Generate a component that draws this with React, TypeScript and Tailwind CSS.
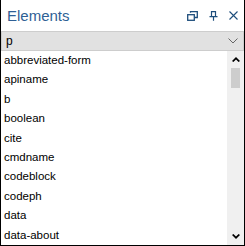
import React from "react";

const ITEMS = [
  "abbreviated-form",
  "apiname",
  "b",
  "boolean",
  "cite",
  "cmdname",
  "codeblock",
  "codeph",
  "data",
  "data-about",
];

export default function App() {
  return (
    <div
      className="w-[245px] h-[246px] bg-white border-x border-b border-black flex flex-col overflow-hidden"
      style={{ fontFamily: "'Liberation Sans', Arial, sans-serif" }}
    >
      {/* title bar */}
      <div className="h-[31px] flex items-center pl-[6px] pr-[6px] shrink-0">
        <span className="text-[15px] leading-none text-[#2f5f95]">Elements</span>
        <div className="ml-auto flex items-center gap-[11px] text-[#1e4e7c]">
          <svg width="11" height="10" viewBox="0 0 11 10" fill="none" stroke="currentColor" strokeWidth="1.3">
            <rect x="0.7" y="3.7" width="6.6" height="5.6" />
            <path d="M3.5 1.7V0.7H10.3V6.5H7.5" />
          </svg>
          <svg width="9" height="10" viewBox="0 0 9 10" fill="none" stroke="currentColor" strokeWidth="1.2">
            <path d="M2.5 0.6H6.5V5.5H2.5Z" />
            <path d="M0.5 5.6H8.5M4.5 5.6V9.8" />
          </svg>
          <svg width="9" height="9" viewBox="0 0 9 9" fill="none" stroke="currentColor" strokeWidth="1.1">
            <path d="M0.5 0.5L8.5 8.5M8.5 0.5L0.5 8.5" />
          </svg>
        </div>
      </div>

      {/* combobox */}
      <div className="h-[20px] bg-[#e1e1e1] border border-[#cdcdcd] flex items-center pl-[4px] pr-[5px] shrink-0">
        <span className="text-[12px] leading-none text-black">p</span>
        <svg className="ml-auto" width="10" height="6" viewBox="0 0 10 6" fill="none" stroke="#666" strokeWidth="1">
          <path d="M0.5 0.5L5 5L9.5 0.5" />
        </svg>
      </div>

      {/* list */}
      <div className="flex-1 flex min-h-0">
        <div className="flex-1 flex flex-col">
          {ITEMS.map((t) => (
            <div key={t} className="h-[20px] flex items-center pl-[3px] text-[11.5px] leading-none text-black">
              {t}
            </div>
          ))}
        </div>
        <div className="w-[17px] bg-[#f0f0f0] flex flex-col items-center">
          <div className="h-[17px] flex items-center justify-center">
            <svg width="8" height="5" viewBox="0 0 8 5" fill="#000">
              <path d="M0 4L4 0L8 4L6.6 5L4 2.4L1.4 5Z" />
            </svg>
          </div>
          <div className="w-[9px] h-[20px] bg-[#cdcdcd]" />
          <div className="mt-auto h-[17px] flex items-center justify-center">
            <svg width="8" height="5" viewBox="0 0 8 5" fill="#000">
              <path d="M0 1L4 5L8 1L6.6 0L4 2.6L1.4 0Z" />
            </svg>
          </div>
        </div>
      </div>
    </div>
  );
}
